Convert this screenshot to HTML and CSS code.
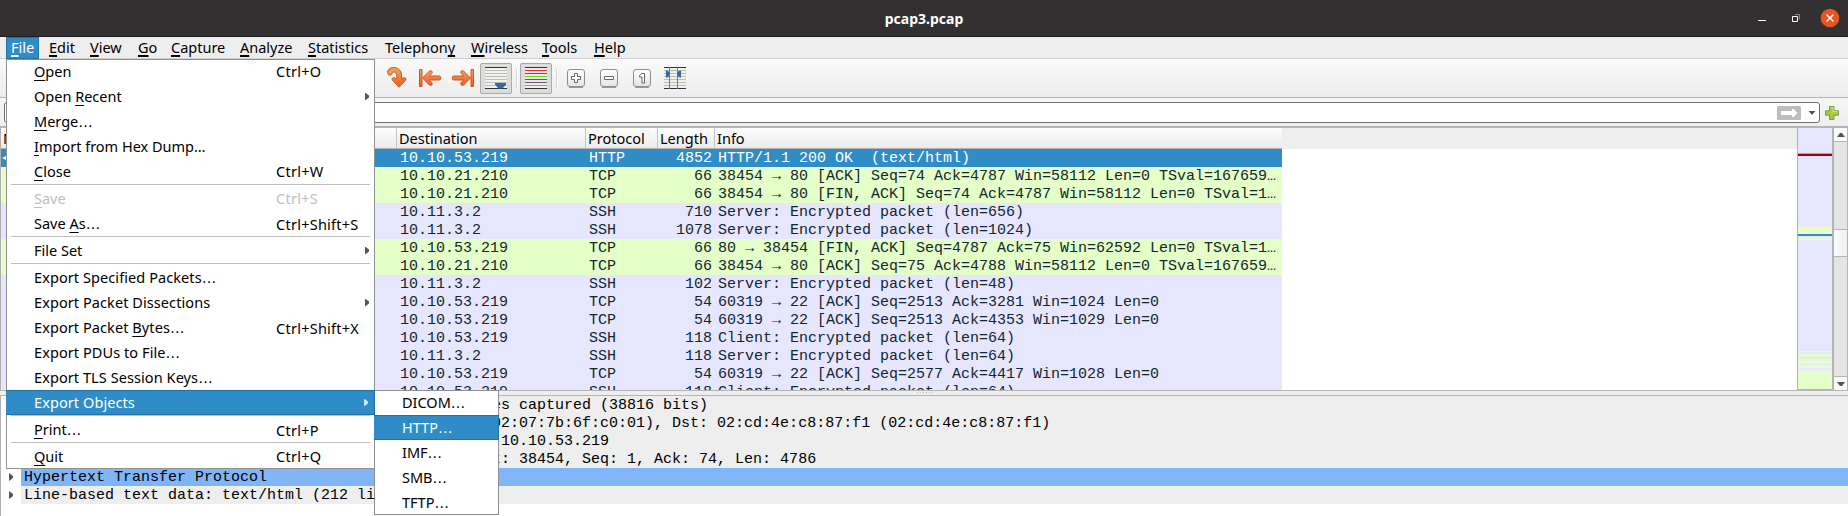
FILE: index.html
```
<!DOCTYPE html>
<html lang="en">
<head>
<meta charset="utf-8">
<title>pcap3.pcap</title>
<link rel="stylesheet" href="styles.css">
</head>
<body>
<div class="window">
  <header class="titlebar">
    <span></span>
    <h1 class="title">pcap3.pcap</h1>
    <div class="controls">
      <svg width="84" height="20" viewBox="0 0 84 20">
        <path d="M0 12.500h8" stroke="#fff"/>
        <path d="M37 6.500h4.500v5" fill="none" stroke="#8a8888"/>
        <path d="M34.500 8.500h5v5h-5z" fill="none" stroke="#fff"/>
        <circle cx="72" cy="10" r="9.300" fill="#e95420"/>
        <path d="M68.500 6.500l7 7M75.500 6.500l-7 7" stroke="#fff" stroke-width="1.500"/>
      </svg>
    </div>
  </header>

  <nav class="menubar">
    <span class="menubar-item active"><u>F</u>ile</span>
    <span class="menubar-item"><u>E</u>dit</span>
    <span class="menubar-item"><u>V</u>iew</span>
    <span class="menubar-item"><u>G</u>o</span>
    <span class="menubar-item"><u>C</u>apture</span>
    <span class="menubar-item"><u>A</u>nalyze</span>
    <span class="menubar-item"><u>S</u>tatistics</span>
    <span class="menubar-item">Telephon<u>y</u></span>
    <span class="menubar-item"><u>W</u>ireless</span>
    <span class="menubar-item"><u>T</u>ools</span>
    <span class="menubar-item"><u>H</u>elp</span>
  </nav>

  <div class="toolbar">
    <svg width="302" height="38" viewBox="386 59 302 38">
      <defs>
        <linearGradient id="or" x1="0" y1="0" x2="0" y2="1"><stop offset="0" stop-color="#eba667"/><stop offset="1" stop-color="#f05a1c"/></linearGradient>
        <linearGradient id="bt" x1="0" y1="0" x2="0" y2="1"><stop offset="0" stop-color="#fff"/><stop offset="1" stop-color="#e4e4e2"/></linearGradient>
      </defs>
      <g fill="url(#or)" stroke="#d0571f" stroke-width="1" stroke-linejoin="round">
        <path d="M387.500 72.500c0-7 13.500-7 14 2v4.500l2-1.200c2-.6 3 1 2 2.500l-6.500 7-6.500-7c-1.200-1.600.5-3.500 2.500-2.300l1.800 1v-3.500c-.5-4-4-4.500-5-1.500-1 2-4 1.500-4.300-1.500z"/>
        <path d="M419.500 69.500h2.500v17h-2.500zM422.500 78l7-7c2-1 3.500.8 2.500 2.300l-2.800 2.700h10.300c1.800 0 1.800 4 0 4h-10.300l2.800 2.700c1 2-1 3.500-2.500 2.500z"/>
        <path d="M473.500 69.500h-2.500v17h2.500zM470.500 78l-7-7c-2-1-3.500.8-2.500 2.300l2.800 2.700h-10.300c-1.800 0-1.800 4 0 4h10.300l-2.800 2.700c-1 2 1 3.500 2.500 2.500z"/>
      </g>
      <g fill="#dcdcdc" stroke="#a9a9a9">
        <rect x="480.500" y="63.500" width="31" height="30" rx="1.500"/>
        <rect x="520.500" y="63.500" width="31" height="30" rx="1.500"/>
      </g>
      <path d="M516.500 69v19M556.500 69v19" stroke="#d5d5d5"/>
      <path d="M517.500 69v19M557.500 69v19" stroke="#fff"/>
      <path d="M485 68h22v20h-22zM525 68h22v20h-22z" fill="#f0f0ec"/>
      <path d="M485 67.500h22M485 88.500h22M525 67.500h22M525 88.500h22" stroke="#2e3436"/>
      <path d="M485 70.500h22M485 73.500h22M485 76.500h22M485 79.500h22M485 82.500h22M485 85.500h22" stroke="#babdb6"/>
      <path d="M495 83h11v1.500l-3.500 4h-4l-3.500-4z" fill="#3465a4"/>
      <g stroke-width="1.100"><path d="M525 70.500h22" stroke="#ef2929"/><path d="M525 73.500h22" stroke="#3465a4"/><path d="M525 76.500h22" stroke="#73d216"/><path d="M525 79.500h22" stroke="#3465a4"/><path d="M525 82.500h22" stroke="#75507b"/><path d="M525 85.500h22" stroke="#c4a000"/></g>
      <g fill="url(#bt)" stroke="#8e908c">
        <rect x="567.500" y="69.500" width="17" height="17" rx="2.500"/>
        <rect x="600.500" y="69.500" width="17" height="17" rx="2.500"/>
        <rect x="633.500" y="69.500" width="17" height="17" rx="2.500"/>
      </g>
      <path d="M569 87.500h14M602 87.500h14M635 87.500h14" stroke="#999"/>
      <g fill="#fff" stroke="#666864">
        <path d="M574.500 73.500h3v3h3v3h-3v3h-3v-3h-3v-3h3z"/>
        <path d="M604.500 76.500h9v3h-9z"/>
        <path d="M641.500 73.500h3v9.500h-2.500v-6h-2.500v-1.500z"/>
      </g>
      <path d="M664 68h22v21h-22z" fill="#f0f0ec"/>
      <path d="M664 70.500h22M664 73.500h22M664 76.500h22M664 79.500h22M664 82.500h22M664 85.500h22" stroke="#babdb6"/>
      <path d="M664 67.500h22M664 88.500h22" stroke="#2e3436"/>
      <path d="M669.500 67v22M677.500 67v22" stroke="#7b7d79"/>
      <path d="M666 70.500h1.500l2 2v3l-2 2h-1.500zM681 70.500h-1.500l-2 2v3l2 2h1.500z" fill="#3465a4"/>
    </svg>
  </div>

  <div class="filterbar">
    <div class="filter-input">
      <svg width="40" height="14" viewBox="0 0 40 14">
        <rect width="24" height="14" rx="1.500" fill="#bdbdbd"/>
        <path d="M4 5h11v-2h1.500l4 4-4 4h-1.500v-2h-11z" fill="#fff"/>
        <path d="M31.500 5h7l-3.500 4z" fill="#555"/>
      </svg>
    </div>
    <svg width="14" height="14" viewBox="0 0 14 14"><path d="M4.500.5h4.500v4.300h4.500v4.400h-4.500v4.300h-4.500v-4.300h-4v-4.400h4z" fill="#a8cc3e" stroke="#7c9c3c" stroke-linejoin="round"/><path d="M5.500 1.500h2.500v4.200h4.500" fill="none" stroke="#cfe58a"/></svg>
  </div>

  <section class="packets">
    <div class="table">
      <div class="thead"><span>No.</span><span>Destination</span><span>Protocol</span><span>Length</span><span>Info</span></div>
      <div class="row selected"><span><i class="mark"></i></span><span>10.10.53.219</span><span>HTTP</span><span>4852</span><span>HTTP/1.1 200 OK  (text/html)</span></div>
      <div class="row tcp"><span></span><span>10.10.21.210</span><span>TCP</span><span>66</span><span>38454 → 80 [ACK] Seq=74 Ack=4787 Win=58112 Len=0 TSval=167659…</span></div>
      <div class="row tcp"><span></span><span>10.10.21.210</span><span>TCP</span><span>66</span><span>38454 → 80 [FIN, ACK] Seq=74 Ack=4787 Win=58112 Len=0 TSval=1…</span></div>
      <div class="row"><span></span><span>10.11.3.2</span><span>SSH</span><span>710</span><span>Server: Encrypted packet (len=656)</span></div>
      <div class="row"><span></span><span>10.11.3.2</span><span>SSH</span><span>1078</span><span>Server: Encrypted packet (len=1024)</span></div>
      <div class="row tcp"><span></span><span>10.10.53.219</span><span>TCP</span><span>66</span><span>80 → 38454 [FIN, ACK] Seq=4787 Ack=75 Win=62592 Len=0 TSval=1…</span></div>
      <div class="row tcp"><span></span><span>10.10.21.210</span><span>TCP</span><span>66</span><span>38454 → 80 [ACK] Seq=75 Ack=4788 Win=58112 Len=0 TSval=167659…</span></div>
      <div class="row"><span></span><span>10.11.3.2</span><span>SSH</span><span>102</span><span>Server: Encrypted packet (len=48)</span></div>
      <div class="row"><span></span><span>10.10.53.219</span><span>TCP</span><span>54</span><span>60319 → 22 [ACK] Seq=2513 Ack=3281 Win=1024 Len=0</span></div>
      <div class="row"><span></span><span>10.10.53.219</span><span>TCP</span><span>54</span><span>60319 → 22 [ACK] Seq=2513 Ack=4353 Win=1029 Len=0</span></div>
      <div class="row"><span></span><span>10.10.53.219</span><span>SSH</span><span>118</span><span>Client: Encrypted packet (len=64)</span></div>
      <div class="row"><span></span><span>10.11.3.2</span><span>SSH</span><span>118</span><span>Server: Encrypted packet (len=64)</span></div>
      <div class="row"><span></span><span>10.10.53.219</span><span>TCP</span><span>54</span><span>60319 → 22 [ACK] Seq=2577 Ack=4417 Win=1028 Len=0</span></div>
      <div class="row"><span></span><span>10.10.53.219</span><span>SSH</span><span>118</span><span>Client: Encrypted packet (len=64)</span></div>
    </div>
    <div class="blank"></div>
    <div class="minimap"></div>
    <div class="scrollbar">
      <div class="scroll-button"><svg width="8" height="4"><path d="M0 4h8l-3-4h-2z" fill="#555"/></svg></div>
      <div class="scroll-thumb"></div>
      <div class="scroll-button"><svg width="8" height="4"><path d="M0 0h8l-3 4h-2z" fill="#555"/></svg></div>
    </div>
  </section>

  <div class="splitter"></div>

  <section class="details">
    <div class="node"><i></i><span>Frame 231: 4852 bytes on wire (38816 bits), 4852 bytes captured (38816 bits)</span></div>
    <div class="node"><i></i><span>Ethernet II, Src: 02:07:7b:6f:c0:01                (02:07:7b:6f:c0:01), Dst: 02:cd:4e:c8:87:f1 (02:cd:4e:c8:87:f1)</span></div>
    <div class="node"><i></i><span>Internet Protocol Version 4, Src: 10.10.21.210, Dst: 10.10.53.219</span></div>
    <div class="node"><i></i><span>Transmission Control Protocol, Src Port: 80, Dst Port: 38454, Seq: 1, Ack: 74, Len: 4786</span></div>
    <div class="node http"><i></i><span>Hypertext Transfer Protocol</span></div>
    <div class="node"><i></i><span>Line-based text data: text/html (212 lines)</span></div>
  </section>

  <div class="menu file-menu">
    <div class="item"><span><u>O</u>pen</span><span>Ctrl+O</span></div>
    <div class="item sub"><span>Open <u>R</u>ecent</span></div>
    <div class="item"><span><u>M</u>erge<b>…</b></span></div>
    <div class="item"><span><u>I</u>mport from Hex Dump…</span></div>
    <div class="item"><span><u>C</u>lose</span><span>Ctrl+W</span></div>
    <hr>
    <div class="item disabled"><span><u>S</u>ave</span><span>Ctrl+S</span></div>
    <div class="item"><span>Save <u>A</u>s<b>…</b></span><span>Ctrl+Shift+S</span></div>
    <hr>
    <div class="item sub"><span>File Set</span></div>
    <hr>
    <div class="item"><span class="wide">Export Specified Packets<b>…</b></span></div>
    <div class="item sub"><span class="wide">Export Packet Dissections</span></div>
    <div class="item"><span class="wide">Export Packet <u>B</u>ytes<b>…</b></span><span>Ctrl+Shift+X</span></div>
    <div class="item"><span class="wide">Export PDUs to File<b>…</b></span></div>
    <div class="item"><span class="wide">Export TLS Session Keys<b>…</b></span></div>
    <div class="item sub current"><span class="wide">Export Objects</span></div>
    <hr>
    <div class="item"><span><u>P</u>rint<b>…</b></span><span>Ctrl+P</span></div>
    <hr>
    <div class="item"><span><u>Q</u>uit</span><span>Ctrl+Q</span></div>
  </div>

  <div class="menu export-menu">
    <div class="item"><span>DICOM<b>…</b></span></div>
    <div class="item current"><span>HTTP<b>…</b></span></div>
    <div class="item"><span>IMF<b>…</b></span></div>
    <div class="item"><span>SMB<b>…</b></span></div>
    <div class="item"><span>TFTP<b>…</b></span></div>
  </div>
</div>
</body>
</html>
```
FILE: styles.css
```
* { box-sizing: border-box; }
body { margin: 0; }
svg { display: block; }
u { text-decoration: underline; text-decoration-thickness: 1px; text-underline-offset: 3px; text-decoration-skip-ink: none; }
b { font-weight: inherit; letter-spacing: 0; font-family: "DejaVu Sans", sans-serif; }

.window {
  position: relative;
  width: 1848px;
  height: 516px;
  overflow: hidden;
  display: flex;
  flex-direction: column;
  background: #eee;
  color: #000;
  font: 14.5px/18px "Noto Sans", "Open Sans", sans-serif;
}

.titlebar {
  height: 37px;
  display: grid;
  grid-template-columns: 1fr auto 1fr;
  align-items: center;
  background: #333031;
  border-bottom: 1px solid #1f1d1e;
}
.title { margin: 0; font-size: 14px; line-height: 18px; font-weight: 700; color: #fff; padding-top: 2px; }
.controls { justify-self: end; padding-right: 6px; }

.menubar {
  height: 22px;
  padding-left: 6px;
  display: grid;
  grid-template-columns: 38px 41px 48px 33px 69px 68px 77px 86px 71px 52px 50px;
  border-bottom: 1px solid #d0d0d0;
}
.menubar-item { padding-left: 5px; line-height: 21px; white-space: nowrap; }
.menubar-item u { text-decoration-thickness: 2px; text-underline-offset: 2px; }
.menubar-item.active { width: 33px; height: 22px; background: #308cc6; border: 1px solid #2472a4; color: #fff; padding-left: 4px; line-height: 19px; }

.toolbar {
  height: 39px;
  padding-left: 386px;
  background: linear-gradient(#fafafa, #ececec);
  border-bottom: 1px solid #b4b4b4;
}

.filterbar {
  height: 30px;
  display: flex;
  align-items: center;
  gap: 5px;
  padding: 4px 9px 3px 4px;
  background: linear-gradient(#f6f6f6, #eee);
  border-bottom: 2px solid #b6b6b6;
}
.filter-input {
  flex: 1;
  height: 21px;
  display: flex;
  align-items: center;
  justify-content: flex-end;
  background: #fff;
  border: 1px solid #707070;
  border-radius: 3px;
  padding-right: 2px;
}

.packets { height: 262px; display: flex; border-left: 1px solid #b0b0b0; overflow: hidden; }
.table { width: 1281px; }
.thead, .row { display: grid; grid-template-columns: 395px 189px 72px 57px 1fr; white-space: pre; }
.thead { height: 21px; line-height: 20px; background: linear-gradient(#fdfdfd, #ebebeb); border-bottom: 1px solid #b4b4b4; }
.thead span { padding-left: 2px; border-left: 1px solid #c4c4c4; }
.thead span:first-child { border-left: 0; }
.row { height: 18px; background: #e7e6ff; color: #12272e; font: 15px/19px "Liberation Mono", monospace; }
.row span { padding-left: 4px; }
.row span:first-child { padding-left: 1px; }
.row span:nth-child(4) { text-align: right; padding-right: 2px; }
.mark { display: block; width: 6px; height: 6px; margin-top: 6px; background: #fff; clip-path: polygon(0 3px, 6px 0, 6px 6px); }
.row.tcp { background: #e4ffc7; }
.row.selected { background: #308cc6; color: #fff; }
.blank { flex: 1; background: linear-gradient(#eee 21px, #fff 21px); }
.minimap {
  width: 36px;
  border: solid #b4b4b4;
  border-width: 0 1px 1px;
  background: linear-gradient(#e7e6ff 25px, #aaa 25px 26px, #a40000 26px 28px, #e7e6ff 28px 98px, #fce9dc 98px 100px, #e4ffc7 100px 106px, #308cc6 106px 108px, #e7e6ff 108px 110px, #e4ffc7 110px 112px, #e7e6ff 112px 223px, #e4ffc7 223px 224px, #e7e6ff 224px 226px, #e4ffc7 226px 229px, #e7e6ff 229px 231px, #e4ffc7 231px 236px, #e7e6ff 236px 237px, #e4ffc7 237px 240px, #e7e6ff 240px 241px, #e4ffc7 241px 242px, #e7e6ff 242px 243px, #e4ffc7 243px);
}
.scrollbar {
  width: 15px;
  display: flex;
  flex-direction: column;
  justify-content: space-between;
  background: #e4e4e4;
  border: solid #b4b4b4;
  border-width: 0 1px;
}
.scroll-button { height: 14px; display: grid; place-items: center; background: #fafafa; border-bottom: 1px solid #b4b4b4; }
.scroll-button:last-child { border-width: 1px 0 0; border-top: 1px solid #b4b4b4; }
.scroll-thumb { height: 28px; margin-bottom: 32px; background: linear-gradient(90deg, #fdfdfd, #f0f0f0); border: solid #b4b4b4; border-width: 1px 0; }

.splitter {
  height: 6px;
  border: solid #b4b4b4;
  border-width: 1px 0;
  background: repeating-linear-gradient(90deg, #bbb 0 1px, transparent 1px 3px) 917px 1px / 17px 1px no-repeat, #eee;
}

.details { flex: 1; background: #fff; border-left: 1px solid #b0b0b0; }
.node { height: 18px; display: flex; align-items: center; font: 15px/18px "Liberation Mono", monospace; white-space: pre; }
.node i { width: 20px; height: 8px; background: #555; clip-path: polygon(8px 0, 12px 3px, 12px 5px, 8px 8px); }
.node span { flex: 1; height: 18px; line-height: 19px; padding-left: 3px; background: #eee; }
.node.http span { background: #80b5f7; }

.menu { position: absolute; background: #fff; }
.menu::after { content: ""; position: absolute; inset: 0; border: 1px solid #909090; pointer-events: none; }
.file-menu { left: 6px; top: 59px; width: 369px; }
.export-menu { left: 374px; top: 390px; width: 125px; }
.item { height: 25px; display: grid; grid-template-columns: 242px 1fr; align-items: center; padding: 0 6px 0 28px; line-height: 25px; white-space: nowrap; }
.item span + span { letter-spacing: 0.25px; }
.item .wide { letter-spacing: 0.08px; }
.export-menu .item { grid-template-columns: 1fr; }
.item.sub::after { content: ""; justify-self: end; width: 4px; height: 8px; background: #555; clip-path: polygon(0 0, 4px 3px, 4px 5px, 0 8px); }
.item.current { position: relative; z-index: 1; background: #308cc6; border: solid #2472a4; border-width: 1px 1px 1px 0; line-height: 23px; color: #fff; }
.item.current.sub::after { background: #cfe6f4; }
.item.disabled { color: #bebebe; }
.menu hr { height: 2px; margin: 0 5px; border: 0; background: linear-gradient(#bebebe 1px, #fff 1px); }
```
